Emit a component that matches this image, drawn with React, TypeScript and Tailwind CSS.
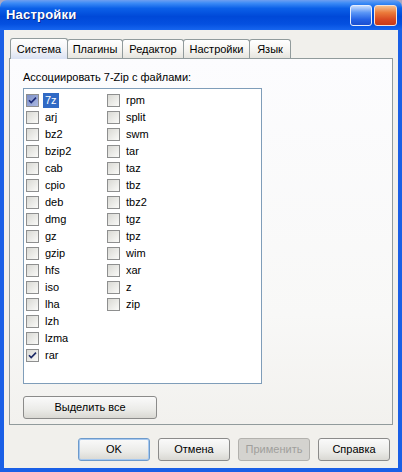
import { useState } from 'react'

const col1 = ['7z', 'arj', 'bz2', 'bzip2', 'cab', 'cpio', 'deb', 'dmg', 'gz', 'gzip', 'hfs', 'iso', 'lha', 'lzh', 'lzma', 'rar']
const col2 = ['rpm', 'split', 'swm', 'tar', 'taz', 'tbz', 'tbz2', 'tgz', 'tpz', 'wim', 'xar', 'z', 'zip']

const tabs = [
    { name: 'Система', w: 'w-[58px]' },
    { name: 'Плагины', w: 'w-[56px]' },
    { name: 'Редактор', w: 'w-[62px]' },
    { name: 'Настройки', w: 'w-[67px]' },
    { name: 'Язык', w: 'w-[42px]' },
]

const CheckBox = ({ checked, focused }: { checked: boolean; focused?: boolean }) => (
    <div className={`w-[13px] h-[13px] shrink-0 border border-[#8e8f8f] flex items-center justify-center ${focused ? 'bg-[linear-gradient(135deg,#7d8fc6,#aab8e2)]' : 'bg-[linear-gradient(135deg,#d9d9d4,#fafaf8)]'}`}>
        {checked && (
            <svg width="9" height="9" viewBox="0 0 9 9">
                <path d="M1 4.2 L3.2 6.6 L8 1.6" fill="none" stroke={focused ? '#1b2a78' : '#1c2a66'} strokeWidth="1.6" />
            </svg>
        )}
    </div>
)

const Item = ({ name, checked, focused }: { name: string; checked: boolean; focused?: boolean }) => (
    <div className="h-[17px] flex items-center">
        <CheckBox checked={checked} focused={focused} />
        <span className={`ml-[4px] px-[2px] leading-[15px] ${focused ? 'bg-[#316ac5] text-white' : ''}`}>{name}</span>
    </div>
)

const Button = ({ label, className = '', disabled, primary }: { label: string; className?: string; disabled?: boolean; primary?: boolean }) => (
    <button
        disabled={disabled}
        className={`h-[23px] rounded-[3px] border flex items-center justify-center ${className} ${disabled
            ? 'border-[#b2b1ad] bg-[#d4d3cf] text-[#a09f9c]'
            : primary
                ? 'border-[#6d9acb] bg-[linear-gradient(#fafafa,#ebebe8_60%,#d9d8d3)] shadow-[inset_0_0_0_1px_#a6c8ef] text-black'
                : 'border-[#8b8b8a] bg-[linear-gradient(#fafafa,#ebebe8_60%,#d9d8d3)] text-black'}`}
    >
        {label}
    </button>
)

export default function App() {
    const [active] = useState(0)
    const checked = new Set(['7z', 'rar'])

    return (
        <div className="w-[402px] h-[472px] overflow-hidden bg-[#a9a8c4] font-['Liberation_Sans',Arial,sans-serif] text-[11px] text-black">
            {/* title bar */}
            <div className="h-[30px] rounded-t-[7px] flex items-center justify-between pl-[6px] pr-[5px] bg-[linear-gradient(#6f9ff0,#3d8cf6_10%,#0b60e8_28%,#0049d8_55%,#0450e0_80%,#1766ef)]">
                <span className="text-white font-bold text-[13px] tracking-[0.2px] [text-shadow:1px_1px_0_#0a2a8a]">Настройки</span>
                <div className="flex gap-[2px]">
                    <div className="w-[22px] h-[21px] rounded-[3px] border border-[#e8eefc] bg-[linear-gradient(#c7dcfd,#5a96f6_35%,#2563e6_70%,#1a4fd0)]" />
                    <div className="w-[23px] h-[21px] rounded-[3px] border border-[#f6e2d8] bg-[linear-gradient(#f6bf8e,#eb7a3a_35%,#d94a22_70%,#c83a18)]" />
                </div>
            </div>

            {/* body */}
            <div className="h-[438px] border-x-[4px] border-[#1a5fe6] bg-[#f1f0ec] pt-[7px] pl-[5px] pr-[5px] pb-[7px] flex flex-col">
                <div className="flex items-end h-[21px] pl-[1px]">
                    {tabs.map((t, i) => (
                        <div
                            key={t.name}
                            className={`${t.w} -ml-px first:ml-0 flex items-center justify-center rounded-t-[3px] border border-b-0 border-[#919b9c] ${i === active
                                ? 'h-[21px] relative z-10 bg-[linear-gradient(#fefefe,#f3f3f6_55%,#d9e1f3)] translate-y-px'
                                : 'h-[19px] bg-[linear-gradient(#ffffff,#f4f3ef_60%,#e6e5df)]'}`}
                        >
                            {t.name}
                        </div>
                    ))}
                </div>

                <div className="h-[367px] border border-[#919b9c] bg-[linear-gradient(#fcfcfe,#f8f8f7_70%,#f2f1ee)] pt-[12px] pl-[13px] flex flex-col">
                    <div className="leading-[13px]">Ассоциировать 7-Zip с файлами:</div>
                    <div className="mt-[4px] w-[239px] h-[296px] border border-[#7f9db9] bg-white pt-[3px] pl-[2px] flex">
                        <div className="w-[81px]">
                            {col1.map((n, i) => (
                                <Item key={n} name={n} checked={checked.has(n)} focused={i === 0} />
                            ))}
                        </div>
                        <div>
                            {col2.map(n => (
                                <Item key={n} name={n} checked={checked.has(n)} />
                            ))}
                        </div>
                    </div>
                    <Button label="Выделить все" className="mt-[12px] w-[134px] h-[22px]" />
                </div>

                <div className="mt-[13px] flex justify-end gap-[8px] pr-[3px]">
                    <Button label="OK" className="w-[72px]" primary />
                    <Button label="Отмена" className="w-[72px]" />
                    <Button label="Применить" className="w-[72px]" disabled />
                    <Button label="Справка" className="w-[72px]" />
                </div>
            </div>

            <div className="h-[4px] bg-[#1a5fe6]" />
        </div>
    )
}
